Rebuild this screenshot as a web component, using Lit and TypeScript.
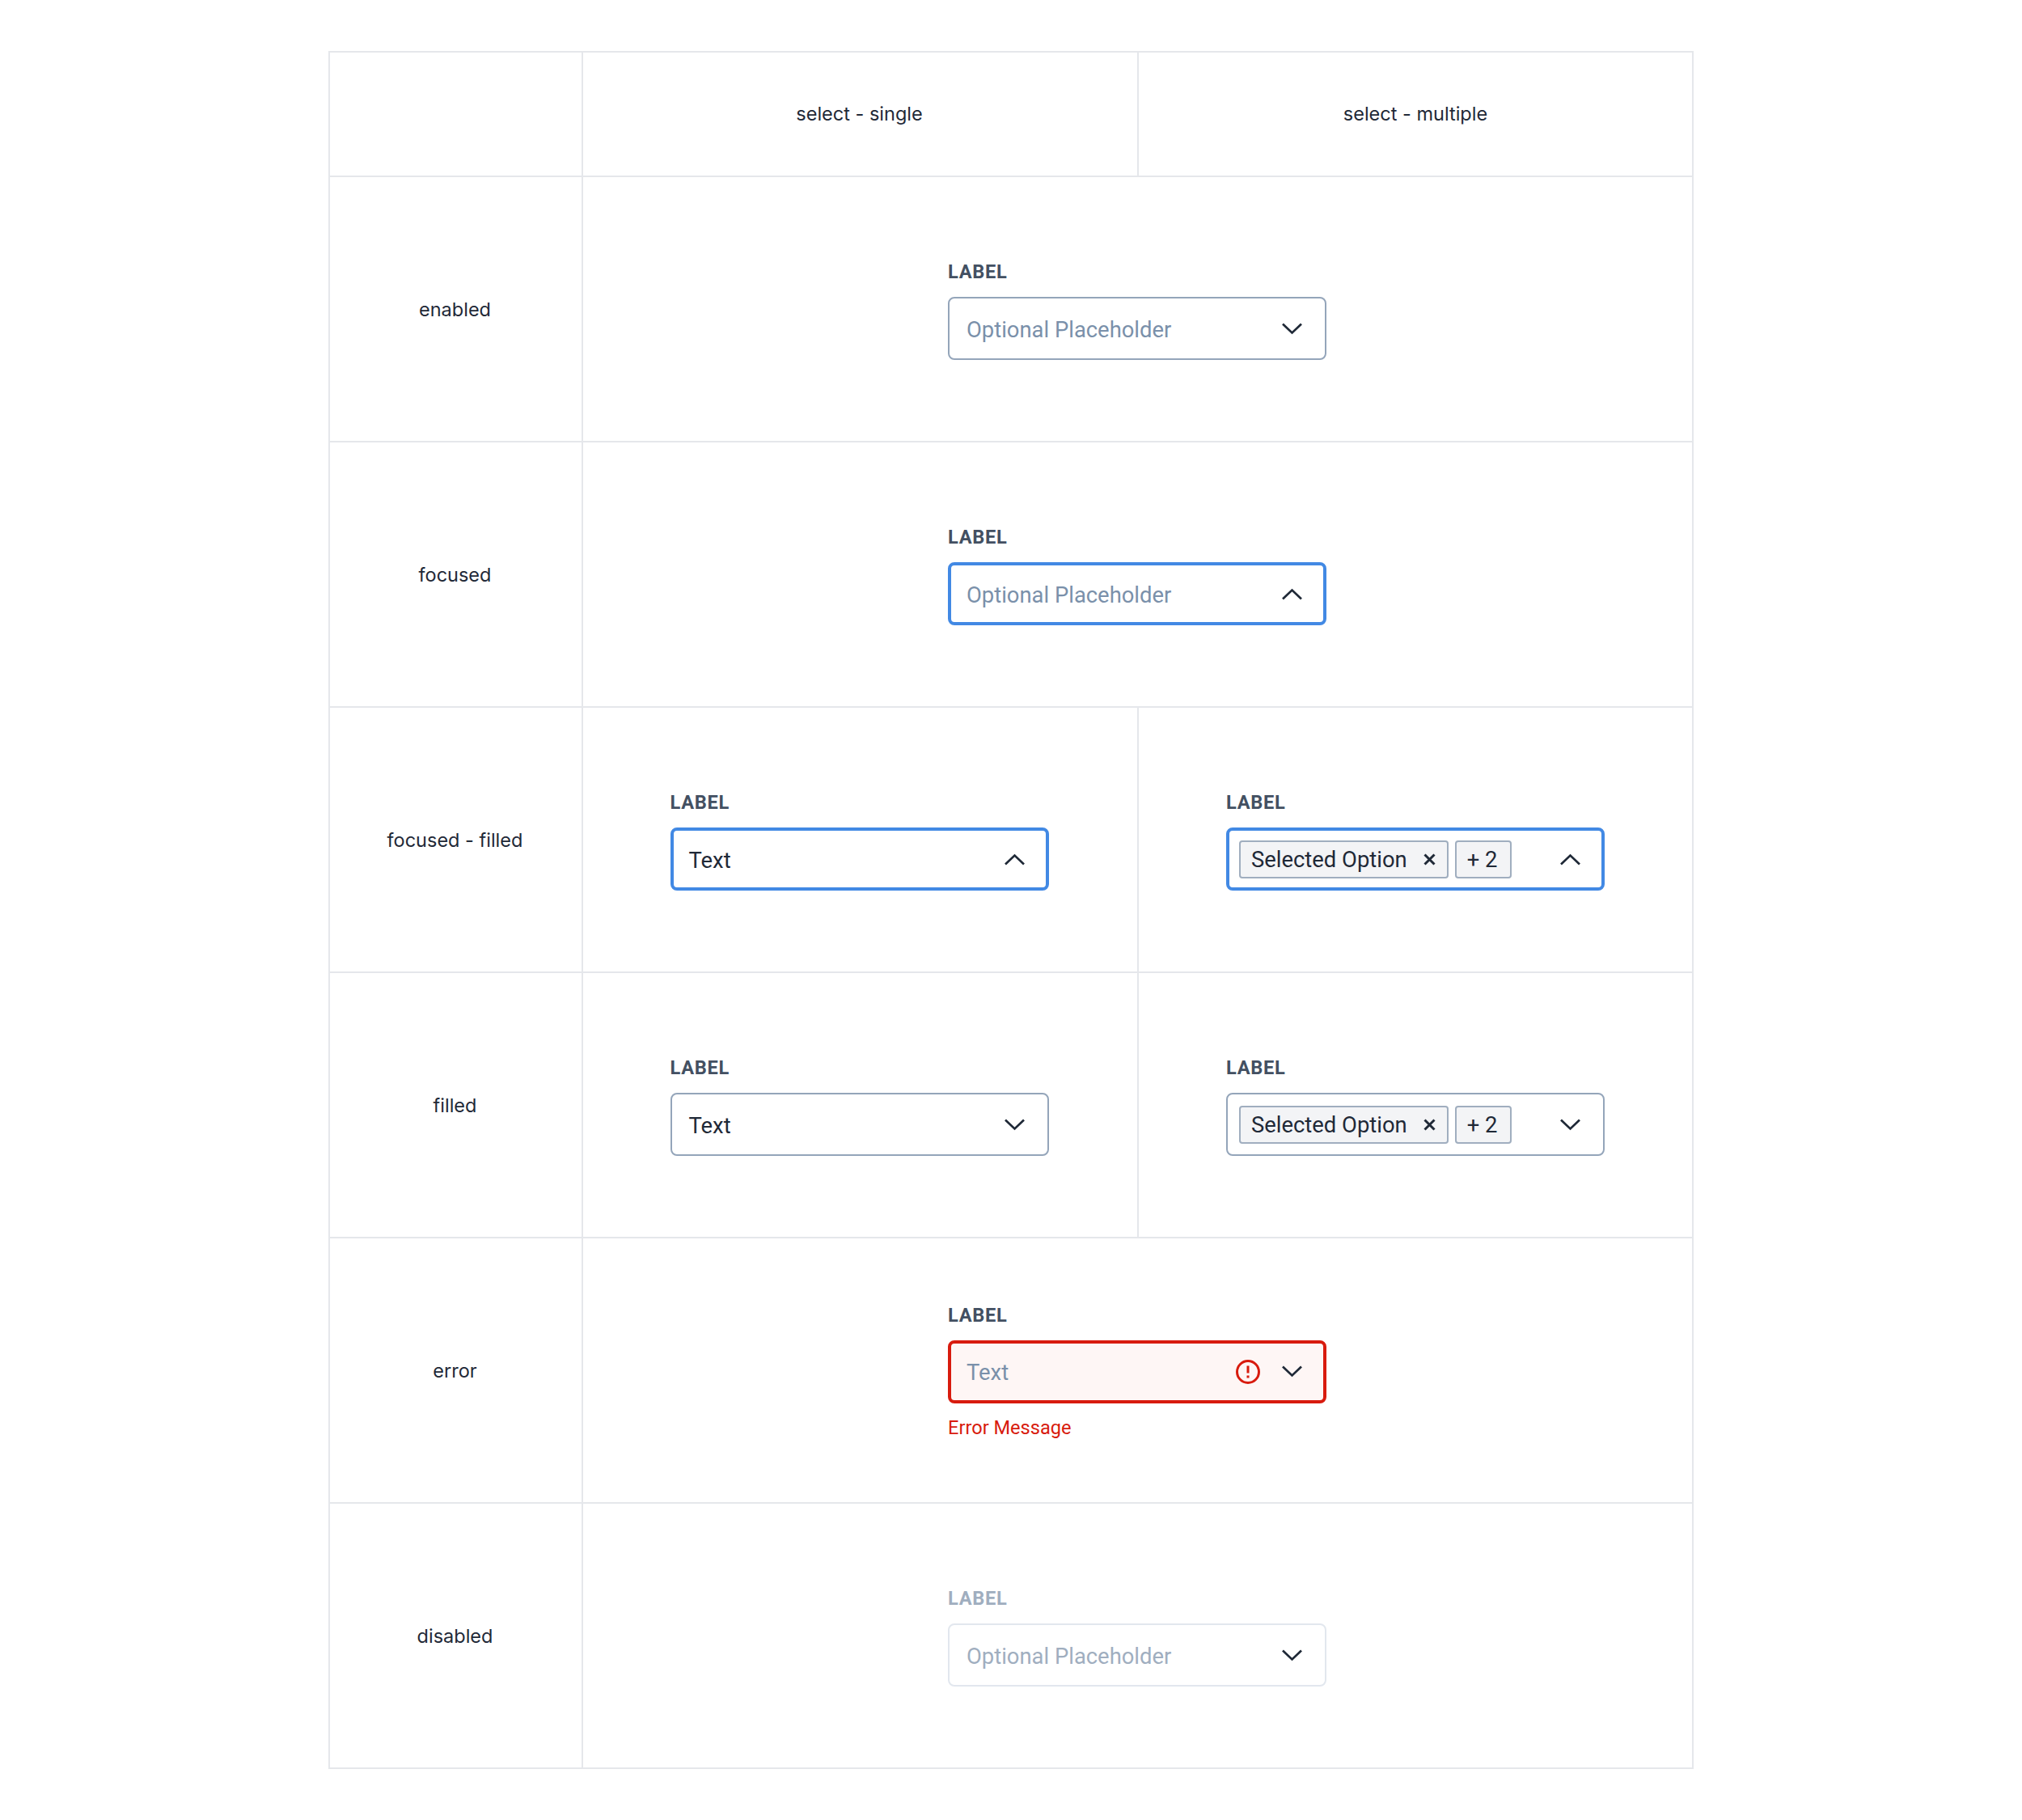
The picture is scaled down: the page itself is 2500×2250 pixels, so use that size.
import { LitElement, css, html, nothing } from 'lit';
import { customElement, property } from 'lit/decorators.js';

@customElement('app-select')
export class AppSelect extends LitElement {
  static styles = css`
    :host {
      display: block;
      width: 468px;
      font-family: Roboto, 'Liberation Sans', sans-serif;
    }

    .label {
      font-size: 23.6px;
      line-height: 34px;
      font-weight: 700;
      color: #435062;
      margin-bottom: 14px;
      letter-spacing: 0.7px;
    }

    .box {
      box-sizing: border-box;
      display: flex;
      align-items: center;
      height: 78px;
      padding: 0 28px 0 21px;
      border: 2px solid #94a5ba;
      border-radius: 8px;
      background: #fff;
      font-size: 27.4px;
      color: #1f2937;
    }

    .value {
      flex: 1;
      padding-top: 3px;
      white-space: nowrap;
    }

    .placeholder {
      color: #7a90aa;
    }

    .focused {
      border: 4px solid #4289e4;
      padding: 0 26px 0 19px;
    }

    .multi {
      padding-left: 14px;
    }

    .focused.multi {
      padding-left: 12px;
    }

    .chips {
      flex: 1;
      display: flex;
      gap: 8px;
    }

    .chip {
      box-sizing: border-box;
      display: flex;
      align-items: center;
      gap: 20px;
      height: 47px;
      padding: 0 14px 0 13px;
      border: 2px solid #a0aebf;
      border-radius: 4px;
      background: #f3f4f6;
      white-space: nowrap;
    }

    .count {
      padding-right: 16px;
    }

    .chip-text {
      padding-top: 2px;
    }

    .error {
      border: 4px solid #d81b0e;
      padding: 0 26px 0 19px;
      background: #fef6f5;
    }

    .alert {
      margin-right: 27px;
      display: block;
    }

    .chev {
      display: block;
    }

    .disabled .label {
      color: #a0aebf;
    }

    .disabled .box {
      border-color: #e2e7ee;
    }

    .disabled .placeholder {
      color: #a0aebf;
    }

    .message {
      margin-top: 16px;
      font-size: 23.6px;
      line-height: 29px;
      color: #d81b0e;
    }
  `;

  @property() state = 'enabled';
  @property({ type: Boolean }) multiple = false;
  @property() text = '';

  renderChevron(up: boolean) {
    return html`<svg class="chev" width="25" height="15" viewBox="0 0 25 15" fill="none" stroke="#1f2937" stroke-width="2.7">
      <path d=${up ? 'M1 13.5 12.5 2.5 24 13.5' : 'M1 1.5 12.5 12.5 24 1.5'}></path>
    </svg>`;
  }

  render() {
    const focused = this.state === 'focused';
    const error = this.state === 'error';
    const boxClass = ['box', focused ? 'focused' : '', error ? 'error' : '', this.multiple ? 'multi' : ''].join(' ');
    return html`
      <div class=${this.state === 'disabled' ? 'disabled' : ''}>
        <div class="label">LABEL</div>
        <div class=${boxClass}>
          ${this.multiple
            ? html`<div class="chips">
                <div class="chip">
                  <span class="chip-text">Selected Option</span>
                  <svg width="15" height="15" viewBox="0 0 15 15" fill="none" stroke="#1f2937" stroke-width="3">
                    <path d="M1.5 1.5l12 12M13.5 1.5l-12 12"></path>
                  </svg>
                </div>
                <div class="chip count"><span class="chip-text">+ 2</span></div>
              </div>`
            : html`<div class="value ${this.text && !error ? '' : 'placeholder'}">${this.text || 'Optional Placeholder'}</div>`}
          ${error
            ? html`<svg class="alert" width="30" height="30" viewBox="0 0 30 30" fill="none" stroke="#d81b0e" stroke-width="3">
                <circle cx="15" cy="15" r="13.5"></circle>
                <path d="M15 7.5v9M15 19.5v3"></path>
              </svg>`
            : nothing}
          ${this.renderChevron(focused)}
        </div>
        ${error ? html`<div class="message">Error Message</div>` : nothing}
      </div>
    `;
  }
}

type Row = { name: string; state: string; text?: string; split?: boolean };

const ROWS: Row[] = [
  { name: 'enabled', state: 'enabled' },
  { name: 'focused', state: 'focused' },
  { name: 'focused - filled', state: 'focused', text: 'Text', split: true },
  { name: 'filled', state: 'enabled', text: 'Text', split: true },
  { name: 'error', state: 'error', text: 'Text' },
  { name: 'disabled', state: 'disabled' },
];

@customElement('app-root')
export class AppRoot extends LitElement {
  static styles = css`
    :host {
      display: block;
      width: 2500px;
      height: 2250px;
      padding-top: 63px;
      box-sizing: border-box;
      background: #fff;
      font-family: Inter, 'Liberation Sans', sans-serif;
      font-size: 23.5px;
      color: #1f2937;
    }

    .table {
      display: grid;
      grid-template-columns: 311px 687px 686px;
      grid-template-rows: 154px repeat(6, 328px);
      width: 1688px;
      margin-left: 406px;
      box-sizing: border-box;
      border: 2px solid #e5e7eb;
      border-bottom: 0;
    }

    .cell {
      display: flex;
      align-items: center;
      justify-content: center;
      border-bottom: 2px solid #e5e7eb;
      border-left: 2px solid #e5e7eb;
    }

    .first {
      border-left: 0;
      padding-right: 2px;
    }

    .single {
      padding-right: 2px;
    }

    .head {
      padding-bottom: 2px;
    }

    .wide {
      grid-column: span 2;
      padding-right: 1px;
    }
  `;

  render() {
    return html`
      <div class="table">
        <div class="cell first"></div>
        <div class="cell single head">select - single</div>
        <div class="cell head">select - multiple</div>
        ${ROWS.map(
          (row) => html`
            <div class="cell first">${row.name}</div>
            ${row.split
              ? html`
                  <div class="cell single"><app-select .state=${row.state} .text=${row.text ?? ''}></app-select></div>
                  <div class="cell"><app-select .state=${row.state} multiple></app-select></div>
                `
              : html`<div class="cell wide"><app-select .state=${row.state} .text=${row.text ?? ''}></app-select></div>`}
          `,
        )}
      </div>
    `;
  }
}
